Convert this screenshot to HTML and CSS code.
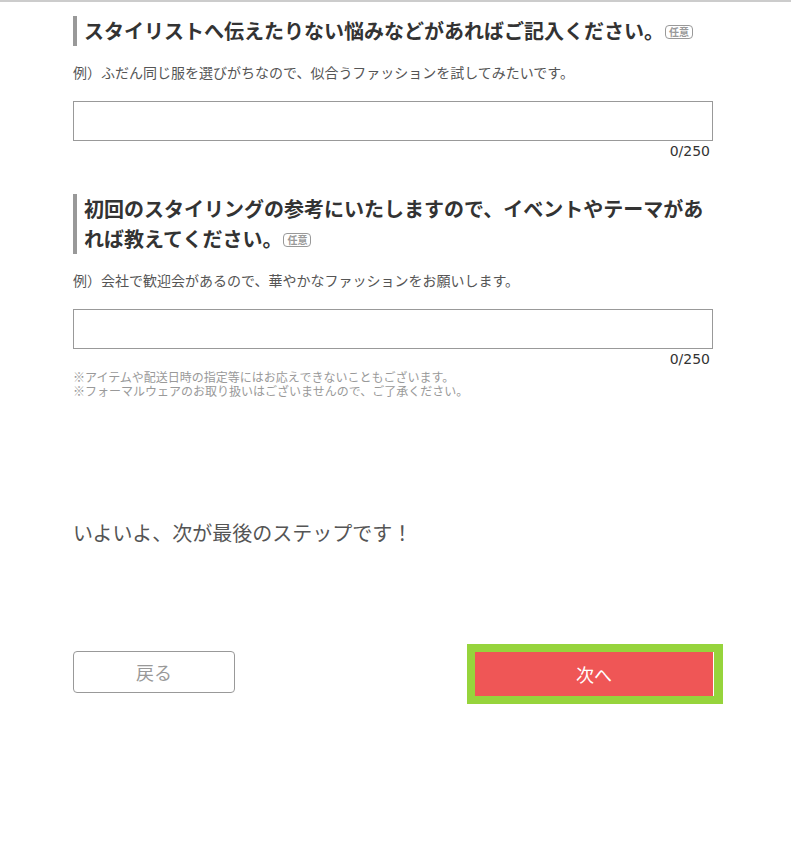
FILE: index.html
```html
<!DOCTYPE html>
<html lang="ja">
<head>
  <meta charset="UTF-8">
  <title>ご要望の入力</title>
  <meta name="viewport" content="width=device-width, initial-scale=1.0">
  <link rel="stylesheet" href="styles.css">
</head>
<body>

  <div class="form">
    <h2 class="question">スタイリストへ伝えたりない悩みなどがあればご記入ください。<span class="badge">任意</span></h2>
    <p class="example">例）ふだん同じ服を選びがちなので、似合うファッションを試してみたいです。</p>
    <input type="text" class="answer" maxlength="250">
    <div class="counter">0/250</div>

    <h2 class="question">初回のスタイリングの参考にいたしますので、イベントやテーマがあれば教えてください。<span class="badge">任意</span></h2>
    <p class="example">例）会社で歓迎会があるので、華やかなファッションをお願いします。</p>
    <input type="text" class="answer" maxlength="250">
    <div class="counter">0/250</div>

    <div class="notes">
      <p class="note">※アイテムや配送日時の指定等にはお応えできないこともございます。</p>
      <p class="note">※フォーマルウェアのお取り扱いはございませんので、ご了承ください。</p>
    </div>

    <p class="step">いよいよ、次が最後のステップです！</p>

    <div class="actions">
      <button class="back">戻る</button>
      <div class="next-frame">
        <button class="next">次へ</button>
      </div>
    </div>
  </div>

</body>
</html>
```

FILE: styles.css
```css
/* Page */
body {
  margin: 0;
  border-top: 2px solid #ccc;
  background: #fff;
  font-family: "Noto Sans CJK JP", "Noto Sans", sans-serif;
  color: #333;
}

.form {
  width: 640px;
  margin-left: 73px;
}

/* Question headings */
.question {
  margin: 14px 0 0;
  padding-left: 7px;
  border-left: 4px solid #999;
  font-size: 20px;
  line-height: 30px;
  font-weight: bold;
  color: #333;
}

.counter + .question {
  margin-top: 33px;
}

.badge {
  display: inline-block;
  margin-left: 1px;
  padding: 0 3px;
  border: 1px solid #999;
  border-radius: 4px;
  font-size: 10px;
  line-height: 12px;
  font-weight: bold;
  color: #999;
  vertical-align: 3px;
}

.example {
  margin: 16px 0 0;
  font-size: 14px;
  line-height: 20px;
  color: #555;
}

/* Inputs */
.answer {
  display: block;
  box-sizing: border-box;
  width: 640px;
  height: 40px;
  margin-top: 19px;
  padding: 0 8px;
  border: 1px solid #999;
  border-radius: 0;
  font-size: 14px;
}

.counter {
  padding-right: 3px;
  text-align: right;
  font-family: "DejaVu Sans", sans-serif;
  font-size: 14px;
  line-height: 20px;
  color: #333;
}

.notes {
  margin-top: 1px;
}

.note {
  margin: 0;
  font-size: 12px;
  line-height: 14px;
  color: #999;
}

.step {
  margin: 120px 0 0;
  font-size: 20px;
  line-height: 30px;
  color: #555;
}

/* Buttons */
.actions {
  display: flex;
  justify-content: space-between;
  align-items: flex-start;
  margin-top: 103px;
}

.back {
  width: 162px;
  height: 42px;
  background: #fff;
  border: 1px solid #999;
  border-radius: 4px;
  font-family: inherit;
  font-size: 18px;
  color: #999;
  cursor: pointer;
}

/* highlighted frame round the primary button */
.next-frame {
  display: flex;
  margin: -7px -10px 0 0;
  padding: 8px 9px 8px 8px;
  background: #96d43c;
}

.next {
  width: 239px;
  height: 44px;
  background: #ef5656;
  border: none;
  border-right: 1px solid #fff;
  font-family: inherit;
  font-size: 18px;
  color: #fff;
  cursor: pointer;
}
```
